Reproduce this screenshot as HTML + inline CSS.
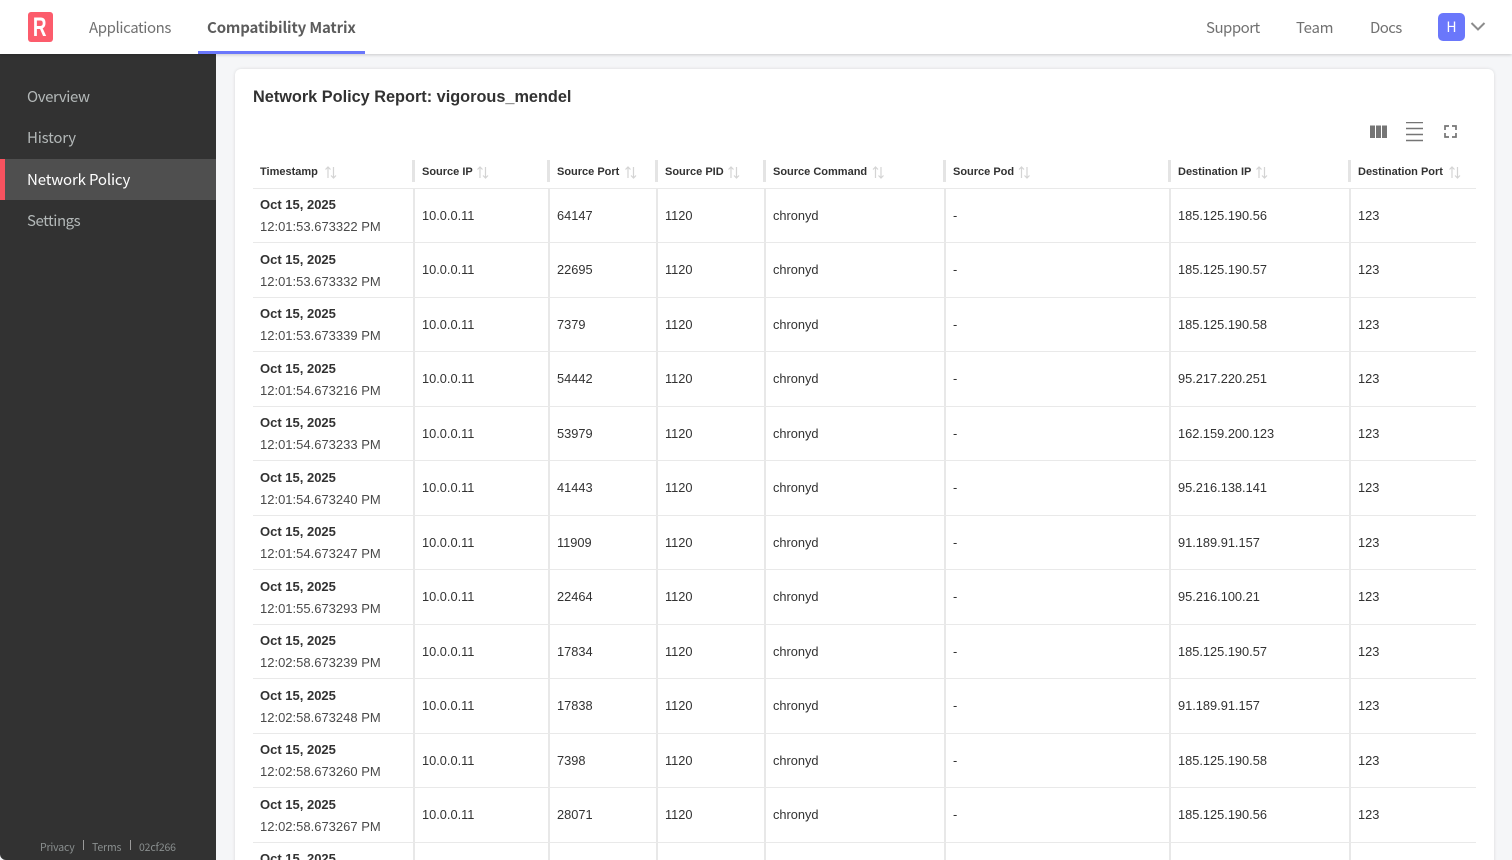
<!DOCTYPE html>
<html lang="en"><head><meta charset="utf-8"><title>Network Policy Report</title>
<style>
*{box-sizing:border-box}
html,body{margin:0;padding:0;width:1512px;height:860px;overflow:hidden;background:#f5f6f8;font-family:"Liberation Sans",sans-serif;color:#323232}
#wrap{position:relative;width:1512px;height:860px;overflow:hidden;background:#f5f6f8}
.os{font-family:"Noto Sans CJK JP","Liberation Sans",sans-serif}
#top{position:absolute;left:0;top:0;width:1512px;height:54px;background:#fff;box-shadow:0 1px 3px rgba(0,0,0,.18);z-index:5}
#top a{position:absolute;top:18px;font-size:15px;line-height:20px;color:#717171;white-space:nowrap}
#logo{position:absolute;left:27.500px;top:12px;width:25px;height:30px;background:#fc5c6c;border-radius:3px;color:#fff;font-weight:700;font-size:27px;line-height:30px;text-align:center}
#logo span{display:inline-block;transform:scaleX(.7)}
#tab{position:absolute;left:198px;top:51px;width:167px;height:3px;background:#6a77fb}
#av{position:absolute;left:1438px;top:13px;width:27px;height:28px;background:#6a77fb;border-radius:5px;color:#fff;font-size:14px;line-height:28px;text-align:center}
#side{position:absolute;left:0;top:54px;width:216px;height:806px;background:#323232;border-radius:0 0 0 6px}
#side a{position:absolute;left:27px;font-size:15px;line-height:20px;color:#b3b8b8}
#act{position:absolute;left:0;top:104.5px;width:216px;height:41.5px;background:#4f4f4f;border-left:5px solid #f7525f}
#foot span{position:absolute;top:787px;font-size:10.5px;line-height:14px;color:#8a8f8f;letter-spacing:-.15px}
#foot i{position:absolute;top:786px;width:1px;height:10px;background:#9a9a9a}
#card{position:absolute;left:235px;top:69px;width:1259px;height:830px;background:#fff;border-radius:6px;box-shadow:0 0 3px rgba(0,0,0,.12)}
h1{position:absolute;left:253px;top:87px;margin:0;font-size:16.3px;line-height:20px;font-weight:700;color:#323232;white-space:nowrap}
.th{position:absolute;top:165px;font-size:11px;line-height:14px;font-weight:700;color:#323232;white-space:nowrap}
.sep{position:absolute;top:160px;width:3px;height:22px;background:#e4e4e4}
.vl{position:absolute;top:188px;width:2px;height:672px;background:#e8e8e8}
.hl{position:absolute;left:253px;width:1223px;height:1px;background:#e9e9e9}
.r{position:absolute;left:0;width:1512px;height:54.5px}
.r span{position:absolute;top:19.5px;font-size:12.8px;line-height:16px;color:#323232;white-space:nowrap}
.r b{position:absolute;left:260px;top:9px;font-size:13px;line-height:16px;white-space:nowrap;color:#323232}
.r em{position:absolute;left:260px;top:31px;font-style:normal;font-size:13px;line-height:16px;white-space:nowrap;color:#4a4a4a}
.c1{left:422px}.c2{left:557px}.c3{left:665px}.c4{left:773px}.c5{left:953px}.c6{left:1178px}.c7{left:1358px}
</style></head><body>
<div id="wrap">
<div id="top">
<div id="logo"><span>R</span></div>
<a class="os" style="left:89px;letter-spacing:-.4px">Applications</a>
<a class="os" style="left:207px;font-weight:700;color:#5c5c5c;letter-spacing:-.15px">Compatibility Matrix</a>
<div id="tab"></div>
<a class="os" style="left:1206px;letter-spacing:-.5px">Support</a>
<a class="os" style="left:1296px;letter-spacing:-.25px">Team</a>
<a class="os" style="left:1370px;letter-spacing:-.6px">Docs</a>
<div id="av" class="os">H</div>
<svg style="position:absolute;left:1470px;top:21px" width="16" height="11" viewBox="0 0 16 11"><path d="M1.5 2 L8 8.5 L14.5 2" fill="none" stroke="#8c8c8c" stroke-width="2"/></svg>
</div>
<div id="side">
<a class="os" style="top:33px;letter-spacing:-.4px">Overview</a>
<a class="os" style="top:74px;letter-spacing:-.2px">History</a>
<div id="act"></div>
<a class="os" style="top:116px;color:#fff;letter-spacing:-.15px">Network Policy</a>
<a class="os" style="top:157px;letter-spacing:-.45px">Settings</a>
<div id="foot" class="os">
<span style="left:40px">Privacy</span><i style="left:83px"></i>
<span style="left:92px">Terms</span><i style="left:130px"></i>
<span style="left:139px">02cf266</span>
</div>
</div>
<div id="card"></div>
<h1>Network Policy Report: vigorous_mendel</h1>
<svg style="position:absolute;left:1370px;top:122px" width="90" height="20" viewBox="0 0 90 20">
<path d="M0 3.5h5v12.500h-5zM6 3.500h5v12.500h-5zM12 3.500h5v12.500h-5z" fill="#757575"/>
<path d="M36 1h17M36 7h17M36 13h17M36 19h17" stroke="#757575" stroke-width="1.6" fill="none" transform="translate(0,-.5)"/>
<path d="M75 8V4h4M82 4h4v4M86 11v4h-4M79 15h-4v-4" stroke="#757575" stroke-width="1.7" fill="none"/>
</svg>
<div class="th" style="left:260px">Timestamp</div>
<div class="th" style="left:422px">Source IP</div>
<div class="th" style="left:557px">Source Port</div>
<div class="th" style="left:665px">Source PID</div>
<div class="th" style="left:773px">Source Command</div>
<div class="th" style="left:953px">Source Pod</div>
<div class="th" style="left:1178px">Destination IP</div>
<div class="th" style="left:1358px">Destination Port</div>
<svg style="position:absolute;left:0;top:0" width="1512" height="190">
<g fill="none" stroke="#d4d4d4" stroke-width="1.2">
<path d="M328 178V167M325.500 169.500L328 167L330.500 169.500M333.500 167V178M331 175.500L333.500 178L336 175.500"/>
<path d="M480 178V167M477.500 169.500L480 167L482.500 169.500M485.500 167V178M483 175.500L485.500 178L488 175.500"/>
<path d="M628 178V167M625.500 169.500L628 167L630.500 169.500M633.500 167V178M631 175.500L633.500 178L636 175.500"/>
<path d="M731 178V167M728.500 169.500L731 167L733.500 169.500M736.500 167V178M734 175.500L736.500 178L739 175.500"/>
<path d="M875.500 178V167M873 169.500L875.500 167L878 169.500M881 167V178M878.500 175.500L881 178L883.500 175.500"/>
<path d="M1021.500 178V167M1019 169.500L1021.500 167L1024 169.500M1027 167V178M1024.500 175.500L1027 178L1029.500 175.500"/>
<path d="M1259 178V167M1256.500 169.500L1259 167L1261.500 169.500M1264.500 167V178M1262 175.500L1264.500 178L1267 175.500"/>
<path d="M1452 178V167M1449.500 169.500L1452 167L1454.500 169.500M1457.500 167V178M1455 175.500L1457.500 178L1460 175.500"/>
</g></svg>
<div class="sep" style="left:412px"></div><div class="sep" style="left:547px"></div><div class="sep" style="left:655px"></div><div class="sep" style="left:763px"></div><div class="sep" style="left:943px"></div><div class="sep" style="left:1168px"></div><div class="sep" style="left:1348px"></div>
<div class="vl" style="left:413px"></div><div class="vl" style="left:548px"></div><div class="vl" style="left:656px"></div><div class="vl" style="left:764px"></div><div class="vl" style="left:944px"></div><div class="vl" style="left:1169px"></div><div class="vl" style="left:1349px"></div>
<div class="hl" style="top:188px"></div><div class="hl" style="top:242px"></div><div class="hl" style="top:297px"></div><div class="hl" style="top:351px"></div><div class="hl" style="top:406px"></div><div class="hl" style="top:460px"></div><div class="hl" style="top:515px"></div><div class="hl" style="top:569px"></div><div class="hl" style="top:624px"></div><div class="hl" style="top:678px"></div><div class="hl" style="top:733px"></div><div class="hl" style="top:787px"></div><div class="hl" style="top:842px"></div>

<div class="r" style="top:188px"><b>Oct 15, 2025</b><em>12:01:53.673322 PM</em><span class="c1">10.0.0.11</span><span class="c2">64147</span><span class="c3">1120</span><span class="c4">chronyd</span><span class="c5">-</span><span class="c6">185.125.190.56</span><span class="c7">123</span></div>
<div class="r" style="top:242.5px"><b>Oct 15, 2025</b><em>12:01:53.673332 PM</em><span class="c1">10.0.0.11</span><span class="c2">22695</span><span class="c3">1120</span><span class="c4">chronyd</span><span class="c5">-</span><span class="c6">185.125.190.57</span><span class="c7">123</span></div>
<div class="r" style="top:297px"><b>Oct 15, 2025</b><em>12:01:53.673339 PM</em><span class="c1">10.0.0.11</span><span class="c2">7379</span><span class="c3">1120</span><span class="c4">chronyd</span><span class="c5">-</span><span class="c6">185.125.190.58</span><span class="c7">123</span></div>
<div class="r" style="top:351.5px"><b>Oct 15, 2025</b><em>12:01:54.673216 PM</em><span class="c1">10.0.0.11</span><span class="c2">54442</span><span class="c3">1120</span><span class="c4">chronyd</span><span class="c5">-</span><span class="c6">95.217.220.251</span><span class="c7">123</span></div>
<div class="r" style="top:406px"><b>Oct 15, 2025</b><em>12:01:54.673233 PM</em><span class="c1">10.0.0.11</span><span class="c2">53979</span><span class="c3">1120</span><span class="c4">chronyd</span><span class="c5">-</span><span class="c6">162.159.200.123</span><span class="c7">123</span></div>
<div class="r" style="top:460.5px"><b>Oct 15, 2025</b><em>12:01:54.673240 PM</em><span class="c1">10.0.0.11</span><span class="c2">41443</span><span class="c3">1120</span><span class="c4">chronyd</span><span class="c5">-</span><span class="c6">95.216.138.141</span><span class="c7">123</span></div>
<div class="r" style="top:515px"><b>Oct 15, 2025</b><em>12:01:54.673247 PM</em><span class="c1">10.0.0.11</span><span class="c2">11909</span><span class="c3">1120</span><span class="c4">chronyd</span><span class="c5">-</span><span class="c6">91.189.91.157</span><span class="c7">123</span></div>
<div class="r" style="top:569.5px"><b>Oct 15, 2025</b><em>12:01:55.673293 PM</em><span class="c1">10.0.0.11</span><span class="c2">22464</span><span class="c3">1120</span><span class="c4">chronyd</span><span class="c5">-</span><span class="c6">95.216.100.21</span><span class="c7">123</span></div>
<div class="r" style="top:624px"><b>Oct 15, 2025</b><em>12:02:58.673239 PM</em><span class="c1">10.0.0.11</span><span class="c2">17834</span><span class="c3">1120</span><span class="c4">chronyd</span><span class="c5">-</span><span class="c6">185.125.190.57</span><span class="c7">123</span></div>
<div class="r" style="top:678.5px"><b>Oct 15, 2025</b><em>12:02:58.673248 PM</em><span class="c1">10.0.0.11</span><span class="c2">17838</span><span class="c3">1120</span><span class="c4">chronyd</span><span class="c5">-</span><span class="c6">91.189.91.157</span><span class="c7">123</span></div>
<div class="r" style="top:733px"><b>Oct 15, 2025</b><em>12:02:58.673260 PM</em><span class="c1">10.0.0.11</span><span class="c2">7398</span><span class="c3">1120</span><span class="c4">chronyd</span><span class="c5">-</span><span class="c6">185.125.190.58</span><span class="c7">123</span></div>
<div class="r" style="top:787.5px"><b>Oct 15, 2025</b><em>12:02:58.673267 PM</em><span class="c1">10.0.0.11</span><span class="c2">28071</span><span class="c3">1120</span><span class="c4">chronyd</span><span class="c5">-</span><span class="c6">185.125.190.56</span><span class="c7">123</span></div>
<div class="r" style="top:842px"><b>Oct 15, 2025</b></div>
</div>
</body></html>
